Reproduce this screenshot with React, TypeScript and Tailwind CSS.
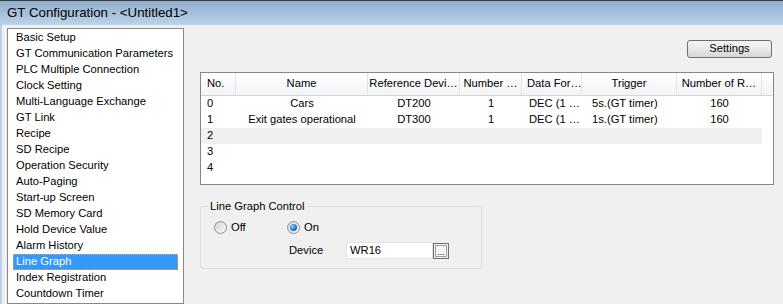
import React from "react";

const items = [
  "Basic Setup",
  "GT Communication Parameters",
  "PLC Multiple Connection",
  "Clock Setting",
  "Multi-Language Exchange",
  "GT Link",
  "Recipe",
  "SD Recipe",
  "Operation Security",
  "Auto-Paging",
  "Start-up Screen",
  "SD Memory Card",
  "Hold Device Value",
  "Alarm History",
  "Line Graph",
  "Index Registration",
  "Countdown Timer",
];

const cols = [
  { title: "No.", w: 35, align: "left" },
  { title: "Name", w: 132, align: "center" },
  { title: "Reference Devi…", w: 92, align: "center" },
  { title: "Number …", w: 62, align: "center" },
  { title: "Data For…", w: 60, align: "left" },
  { title: "Trigger", w: 95, align: "center" },
  { title: "Number of R…", w: 85, align: "center" },
];

const rows: string[][] = [
  ["0", "Cars", "DT200", "1", "DEC (1 …", "5s.(GT timer)", "160"],
  ["1", "Exit gates operational", "DT300", "1", "DEC (1 …", "1s.(GT timer)", "160"],
  ["2", "", "", "", "", "", ""],
  ["3", "", "", "", "", "", ""],
  ["4", "", "", "", "", "", ""],
];

function Radio({ checked }: { checked: boolean }) {
  return (
    <div className="w-[13px] h-[13px] rounded-full border border-[#8e9093] bg-gradient-to-br from-[#d4d4d4] to-[#fbfbfb] flex items-center justify-center">
      {checked && (
        <div className="w-[7px] h-[7px] rounded-full bg-[radial-gradient(circle_at_35%_35%,#8fd0ff,#1c6fc4_60%,#0d4c92)]" />
      )}
    </div>
  );
}

export default function App() {
  return (
    <div className="w-[783px] h-[304px] overflow-hidden bg-[#f0f0f0] flex flex-col font-['Liberation_Sans',sans-serif] text-[11.2px] text-black leading-none">
      <div className="h-[25px] shrink-0 border-t border-[#3c3c3c] bg-gradient-to-b from-[#92aecc] to-[#bbd3eb] flex items-center pl-[7px] text-[13.3px] text-black">
        GT Configuration - &lt;Untitled1&gt;
      </div>
      <div className="flex flex-1 min-h-0">
        <div className="w-[2px] shrink-0 bg-[#bcd2ea]" />
        <div className="ml-[5px] mt-[3px] w-[177px] shrink-0 border border-[#828790] bg-white pt-[1px] px-[5px]">
          {items.map((it) => {
            const sel = it === "Line Graph";
            return (
              <div
                key={it}
                className={
                  sel
                    ? "h-[16px] flex items-center pl-[2px] bg-[#3399ff] text-white border border-dotted border-[#e8a050] whitespace-nowrap"
                    : "h-[16px] flex items-center pl-[3px] whitespace-nowrap"
                }
              >
                {it}
              </div>
            );
          })}
        </div>
        <div className="flex-1 pl-[16px] pr-[9px] pt-[15px] flex flex-col">
          <div className="flex justify-end mr-[2px]">
            <div className="w-[85px] h-[18px] border border-[#707070] rounded-[3px] bg-gradient-to-b from-[#f4f4f4] via-[#e9e9e9] to-[#d6d6d6] flex items-center justify-center">
              Settings
            </div>
          </div>
          <div className="mt-[14px] h-[113px] border border-[#828790] bg-white flex flex-col">
            <div className="h-[23px] flex bg-gradient-to-b from-[#ffffff] to-[#f2f3f5] border-b border-[#d5d5d5]">
              {cols.map((c, i) => (
                <div
                  key={i}
                  style={{ width: c.w }}
                  className={
                    "shrink-0 h-full flex items-center overflow-hidden whitespace-nowrap border-r border-[#e3e4e6] " +
                    (c.align === "left" ? (i === 4 ? "pl-[5px]" : "pl-[6px]") : "justify-center")
                  }
                >
                  {c.title}
                </div>
              ))}
              <div className="flex-1" />
            </div>
            {rows.map((r, ri) => (
              <div key={ri} className="h-[16px] flex">
                <div className={"flex " + (ri === 2 ? "bg-[#f0f0f0]" : "")}>
                  {r.map((v, ci) => {
                    const c = cols[ci];
                    return (
                      <div
                        key={ci}
                        style={{ width: c.w }}
                        className={
                          "shrink-0 h-full flex items-center overflow-hidden whitespace-nowrap " +
                          (ci === 0
                            ? "pl-[6px]"
                            : ci === 4
                            ? "pl-[7px]"
                            : ci === 5
                            ? "pl-[10px]"
                            : "justify-center")
                        }
                      >
                        {v}
                      </div>
                    );
                  })}
                </div>
              </div>
            ))}
          </div>
          <fieldset className="mt-[15px] w-[282px] h-[69px] border border-[#d5dfe5] rounded-[3px] px-0 pb-0">
            <legend className="ml-[7px] px-[2px] leading-[12px]">Line Graph Control</legend>
            <div className="pt-[9px] pl-[13px] flex items-center">
              <div className="w-[73px] flex items-center gap-[4px]">
                <Radio checked={false} />
                <span>Off</span>
              </div>
              <div className="flex items-center gap-[4px]">
                <Radio checked={true} />
                <span>On</span>
              </div>
            </div>
            <div className="mt-[8px] pl-[88px] flex items-center">
              <div className="w-[57px]">Device</div>
              <div className="w-[87px] h-[17px] border border-[#e2e3ea] bg-white flex items-center pl-[3px]">WR16</div>
              <div className="w-[16px] h-[16px] border border-[#6f6f6f] bg-[#f0f0f0] p-[1px]">
                <div className="w-full h-full border border-[#a0a0a0] bg-[#f8f8f8] flex items-end justify-center text-[9px] leading-[8px]">...</div>
              </div>
            </div>
          </fieldset>
        </div>
      </div>
    </div>
  );
}
